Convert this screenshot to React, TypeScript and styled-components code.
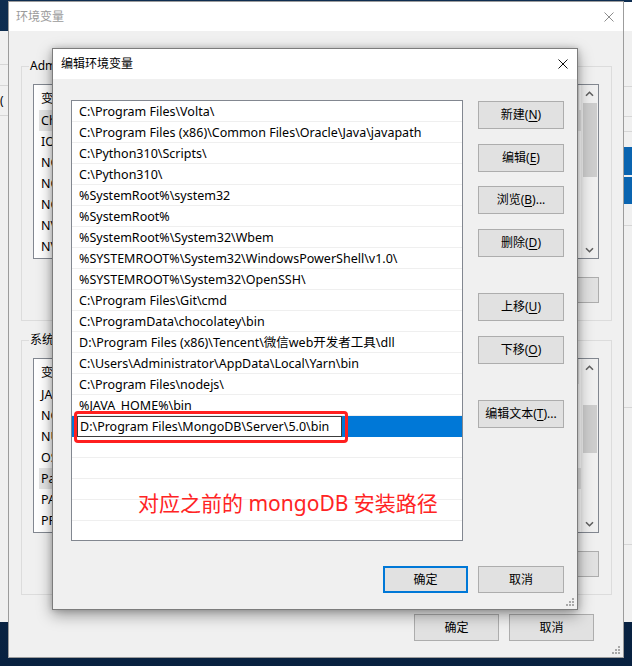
import React from "react";
import styled, { createGlobalStyle } from "styled-components";

const FONT = `"Noto Sans", "Noto Sans CJK SC", sans-serif`;

const GlobalStyle = createGlobalStyle`
  html, body { margin: 0; padding: 0; }
  body {
    width: 632px; height: 666px; overflow: hidden;
    background: #0c2747; font-family: ${FONT}; font-size: 12px; color: #000;
  }
  * { box-sizing: border-box; }
`;

const Desktop = styled.div`
  position: relative;
  width: 632px;
  height: 666px;
  overflow: hidden;
  background: linear-gradient(180deg, #0e2d50 0%, #0b2747 70%, #082140 100%);
`;

/* ---------- windows peeking from behind ---------- */
const BehindWindow = styled.div<{ $left: number; $top: number; $w: number; $h: number }>`
  position: absolute;
  left: ${(p) => p.$left}px;
  top: ${(p) => p.$top}px;
  width: ${(p) => p.$w}px;
  height: ${(p) => p.$h}px;
  background: #f0f0f0;
  display: flex;
  flex-direction: column;
  overflow: hidden;
`;

const BehindRow = styled.div<{ $h: number; $line?: boolean; $blue?: boolean; $white?: boolean }>`
  flex-shrink: 0;
  height: ${(p) => p.$h}px;
  border-bottom: ${(p) => (p.$line ? "1px solid #d6d6d6" : "none")};
  background: ${(p) => (p.$blue ? "#0a64b0" : p.$white ? "#ffffff" : "transparent")};
  font-size: 12px;
  line-height: ${(p) => p.$h}px;
  white-space: nowrap;
  overflow: hidden;
`;

/* ---------- shared window parts ---------- */
const TitleBar = styled.div<{ $h: number; $pl: number; $active?: boolean }>`
  flex-shrink: 0;
  height: ${(p) => p.$h}px;
  background: #ffffff;
  display: flex;
  align-items: center;
  padding: 0 9px 0 ${(p) => p.$pl}px;
  color: ${(p) => (p.$active ? "#000000" : "#9a9a9a")};
  font-size: 12px;
`;

const TitleText = styled.span`
  flex: 1;
  line-height: 16px;
`;

const CloseX = ({ color }: { color: string }) => (
  <svg width="10" height="10" viewBox="0 0 10 10">
    <path d="M0.5 0.5 L9.5 9.5 M9.5 0.5 L0.5 9.5" stroke={color} strokeWidth="1" fill="none" />
  </svg>
);

const Grip = styled.div`
  position: absolute;
  right: 2px;
  bottom: 2px;
  width: 10px;
  height: 10px;
  display: flex;
`;

const GripIcon = () => (
  <Grip>
    <svg width="10" height="10" viewBox="0 0 10 10">
      {[
        [8, 2],
        [5, 5],
        [8, 5],
        [2, 8],
        [5, 8],
        [8, 8],
      ].map(([x, y], i) => (
        <rect key={i} x={x - 1} y={y - 1} width="2" height="2" fill="#a8a8a8" />
      ))}
    </svg>
  </Grip>
);

const WinButton = styled.button<{ $w: number; $h: number; $default?: boolean }>`
  width: ${(p) => p.$w}px;
  height: ${(p) => p.$h}px;
  flex-shrink: 0;
  margin: 0;
  padding: 0;
  background: #e1e1e1;
  border: ${(p) => (p.$default ? "2px solid #0078d7" : "1px solid #adadad")};
  font-family: ${FONT};
  font-size: 12px;
  color: #000;
  line-height: 16px;
  display: flex;
  align-items: center;
  justify-content: center;
  u { text-decoration: underline; text-underline-offset: 2px; }
`;

/* ---------- background "环境变量" window ---------- */
const EnvWindow = styled.div`
  position: absolute;
  left: 8px;
  top: 1px;
  width: 616px;
  height: 657px;
  background: #f0f0f0;
  border: 1px solid #9c9c9c;
  display: flex;
  flex-direction: column;
`;

const EnvBody = styled.div`
  display: flex;
  flex-direction: column;
  gap: 19px;
  padding: 35px 11px 0 12px;
`;

const GroupBox = styled.div`
  position: relative;
  height: 255px;
  border: 1px solid #dcdcdc;
  padding: 17px 12px 0 11px;
  display: flex;
  flex-direction: column;
`;

const Legend = styled.span`
  position: absolute;
  left: 7px;
  top: -9px;
  padding: 0 1px;
  background: #f0f0f0;
  line-height: 16px;
  white-space: nowrap;
`;

const ListView = styled.div`
  height: 175px;
  border: 1px solid #828790;
  background: #fff;
  display: flex;
  flex-shrink: 0;
  font-size: 12.5px;
`;

const ListContent = styled.div`
  flex: 1;
  display: flex;
  flex-direction: column;
  overflow: hidden;
`;

const ListHeader = styled.div`
  height: 25px;
  display: flex;
  align-items: center;
  flex-shrink: 0;
`;

const HeaderCell = styled.div<{ $w: number }>`
  width: ${(p) => p.$w}px;
  height: 100%;
  padding-left: 7px;
  display: flex;
  align-items: center;
  border-right: 1px solid #e5e5e5;
`;

const VarRow = styled.div<{ $selected?: boolean }>`
  height: 21px;
  margin-left: 5px;
  padding-left: 2px;
  display: flex;
  align-items: center;
  flex-shrink: 0;
  white-space: nowrap;
  background: ${(p) => (p.$selected ? "#e5e5e5" : "transparent")};
`;

const VarName = styled.span`
  width: 180px;
`;

const ScrollBar = styled.div`
  width: 17px;
  background: #f0f0f0;
  display: flex;
  flex-direction: column;
  flex-shrink: 0;
`;

const ScrollArrow = styled.div`
  height: 17px;
  display: flex;
  align-items: center;
  justify-content: center;
  flex-shrink: 0;
`;

const ScrollTrack = styled.div`
  flex: 1;
  display: flex;
  flex-direction: column;
`;

const Thumb = styled.div<{ $top: number; $h: number }>`
  margin: ${(p) => p.$top}px 1px 0 2px;
  height: ${(p) => p.$h}px;
  background: #cdcdcd;
`;

const Chevron = ({ down }: { down?: boolean }) => (
  <svg width="9" height="6" viewBox="0 0 9 6">
    <path
      d={down ? "M1 1.2 L4.5 4.7 L8 1.2" : "M1 4.8 L4.5 1.3 L8 4.8"}
      stroke="#606060"
      strokeWidth="1.6"
      fill="none"
    />
  </svg>
);

const ButtonRow = styled.div<{ $mt: number; $pr?: number }>`
  margin-top: ${(p) => p.$mt}px;
  padding-right: ${(p) => p.$pr ?? 0}px;
  display: flex;
  justify-content: flex-end;
  gap: 10px;
`;

/* ---------- foreground "编辑环境变量" dialog ---------- */
const Dialog = styled.div`
  position: absolute;
  left: 52px;
  top: 48px;
  width: 526px;
  height: 562px;
  background: #f0f0f0;
  border: 1px solid #7c7c7c;
  box-shadow: 0 5px 14px rgba(0, 0, 0, 0.38), 0 0 6px rgba(0, 0, 0, 0.18);
  display: flex;
  flex-direction: column;
`;

const DialogBody = styled.div`
  position: relative;
  display: grid;
  grid-template-columns: 392px 86px;
  grid-template-rows: 441px 27px;
  column-gap: 15px;
  row-gap: 25px;
  padding: 21px 13px 0 18px;
`;

const PathList = styled.div`
  border: 1px solid #828790;
  background: #fff;
  display: flex;
  flex-direction: column;
  overflow: hidden;
  font-size: 12.5px;
`;

const PathRow = styled.div<{ $selected?: boolean }>`
  height: 21px;
  flex-shrink: 0;
  display: flex;
  align-items: center;
  padding-left: ${(p) => (p.$selected ? 5 : 7)}px;
  padding-top: ${(p) => (p.$selected ? 0 : 1)}px;
  white-space: nowrap;
  background: ${(p) => (p.$selected ? "#0078d7" : "#fff")};
  border-bottom: ${(p) => (p.$selected ? "none" : "1px solid #efefef")};
  line-height: 19px;
`;

const EditBox = styled.div`
  width: 265px;
  height: 21px;
  background: #fff;
  border: 1px solid #3c3c3c;
  padding-left: 2px;
  display: flex;
  align-items: center;
  white-space: nowrap;
`;

const ButtonColumn = styled.div`
  display: flex;
  flex-direction: column;
  gap: 14.7px;
  padding-top: 1px;
`;

const ColumnSpacer = styled.div`
  height: 6.5px;
  flex-shrink: 0;
`;

const DialogFooter = styled.div`
  grid-column: 1 / -1;
  display: flex;
  justify-content: flex-end;
  gap: 10px;
`;

const RedBox = styled.div`
  position: absolute;
  left: 21px;
  top: 332px;
  width: 274px;
  height: 32px;
  border: 3px solid #ff1f1f;
  border-radius: 4px;
  pointer-events: none;
`;

const RedNote = styled.div`
  position: absolute;
  left: 85px;
  top: 409px;
  font-size: 21px;
  line-height: 30px;
  color: #ff2424;
  white-space: nowrap;
`;

/* ---------- data ---------- */
const paths = [
  "C:\\Program Files\\Volta\\",
  "C:\\Program Files (x86)\\Common Files\\Oracle\\Java\\javapath",
  "C:\\Python310\\Scripts\\",
  "C:\\Python310\\",
  "%SystemRoot%\\system32",
  "%SystemRoot%",
  "%SystemRoot%\\System32\\Wbem",
  "%SYSTEMROOT%\\System32\\WindowsPowerShell\\v1.0\\",
  "%SYSTEMROOT%\\System32\\OpenSSH\\",
  "C:\\Program Files\\Git\\cmd",
  "C:\\ProgramData\\chocolatey\\bin",
  "D:\\Program Files (x86)\\Tencent\\微信web开发者工具\\dll",
  "C:\\Users\\Administrator\\AppData\\Local\\Yarn\\bin",
  "C:\\Program Files\\nodejs\\",
  "%JAVA_HOME%\\bin",
];
const selectedPath = "D:\\Program Files\\MongoDB\\Server\\5.0\\bin";

const userVars = [
  ["ChocolateyLastPathUpdate", "133012345678901234"],
  ["IOT_HOME", "C:\\iot"],
  ["NODE_HOME", "C:\\Program Files\\nodejs"],
  ["NODE_PATH", "C:\\Program Files\\nodejs\\node_modules"],
  ["NODE_GLOBAL", "C:\\Program Files\\nodejs\\node_global"],
  ["NVM_HOME", "C:\\nvm"],
  ["NVM_SYMLINK", "C:\\Program Files\\nodejs"],
];

const sysVars = [
  ["JAVA_HOME", "C:\\Program Files\\Java\\jdk1.8.0"],
  ["NODE_ENV", "development"],
  ["NUMBER_OF_PROCESSORS", "8"],
  ["OS", "Windows_NT"],
  ["Path", "C:\\Program Files\\Volta\\;C:\\Program Files (x86)\\..."],
  ["PATHEXT", ".COM;.EXE;.BAT;.CMD;.VBS;.VBE;.JS"],
  ["PROCESSOR_ARCHITECTURE", "AMD64"],
];

const VarList = ({
  rows,
  selected,
  thumbTop,
  thumbH,
}: {
  rows: string[][];
  selected: number;
  thumbTop: number;
  thumbH: number;
}) => (
  <ListView>
    <ListContent>
      <ListHeader>
        <HeaderCell $w={185}>变量</HeaderCell>
        <HeaderCell $w={360}>值</HeaderCell>
      </ListHeader>
      {rows.map(([n, v], i) => (
        <VarRow key={n} $selected={i === selected}>
          <VarName>{n}</VarName>
          <span>{v}</span>
        </VarRow>
      ))}
    </ListContent>
    <ScrollBar>
      <ScrollArrow>
        <Chevron />
      </ScrollArrow>
      <ScrollTrack>
        <Thumb $top={thumbTop} $h={thumbH} />
      </ScrollTrack>
      <ScrollArrow>
        <Chevron down />
      </ScrollArrow>
    </ScrollBar>
  </ListView>
);

export default function App() {
  return (
    <Desktop>
      <GlobalStyle />

      <BehindWindow $left={0} $top={31} $w={8} $h={591}>
        <BehindRow $h={34} $line />
        <BehindRow $h={21} $line />
        <BehindRow $h={30} $line>(</BehindRow>
      </BehindWindow>

      <BehindWindow $left={624} $top={2} $w={8} $h={620}>
        <BehindRow $h={29} $white />
        <BehindRow $h={56} $line />
        <BehindRow $h={30} $line />
        <BehindRow $h={15} $line />
        <BehindRow $h={15} />
        <BehindRow $h={28} $blue />
        <BehindRow $h={2} />
        <BehindRow $h={27} $blue />
        <BehindRow $h={22} $line />
        <BehindRow $h={182} $line />
        <BehindRow $h={137} $line />
      </BehindWindow>

      <EnvWindow>
        <TitleBar $h={29} $pl={7}>
          <TitleText>环境变量</TitleText>
          <CloseX color="#8c8c8c" />
        </TitleBar>
        <EnvBody>
          <GroupBox>
            <Legend>
              Administrator 的用户变量(<u>U</u>)
            </Legend>
            <VarList rows={userVars} selected={0} thumbTop={1} thumbH={74} />
            <ButtonRow $mt={18}>
              <WinButton $w={86} $h={26}>新建(N)...</WinButton>
              <WinButton $w={86} $h={26}>编辑(E)...</WinButton>
              <WinButton $w={86} $h={26}>删除(D)</WinButton>
            </ButtonRow>
          </GroupBox>
          <GroupBox>
            <Legend>
              系统变量(<u>S</u>)
            </Legend>
            <VarList rows={sysVars} selected={4} thumbTop={29} thumbH={48} />
            <ButtonRow $mt={18}>
              <WinButton $w={86} $h={26}>新建(W)...</WinButton>
              <WinButton $w={86} $h={26}>编辑(I)...</WinButton>
              <WinButton $w={86} $h={26}>删除(L)</WinButton>
            </ButtonRow>
          </GroupBox>
        </EnvBody>
        <ButtonRow $mt={19} $pr={29}>
          <WinButton $w={85} $h={27}>确定</WinButton>
          <WinButton $w={85} $h={27}>取消</WinButton>
        </ButtonRow>
        <GripIcon />
      </EnvWindow>

      <Dialog>
        <TitleBar $h={30} $pl={8} $active>
          <TitleText>编辑环境变量</TitleText>
          <CloseX color="#111111" />
        </TitleBar>
        <DialogBody>
          <PathList>
            {paths.map((p) => (
              <PathRow key={p}>{p}</PathRow>
            ))}
            <PathRow $selected>
              <EditBox>{selectedPath}</EditBox>
            </PathRow>
            {[0, 1, 2, 3, 4].map((i) => (
              <PathRow key={`e${i}`} />
            ))}
          </PathList>
          <ButtonColumn>
            <WinButton $w={86} $h={28}>
              新建(<u>N</u>)
            </WinButton>
            <WinButton $w={86} $h={28}>
              编辑(<u>E</u>)
            </WinButton>
            <WinButton $w={86} $h={28}>
              浏览(<u>B</u>)...
            </WinButton>
            <WinButton $w={86} $h={28}>
              删除(<u>D</u>)
            </WinButton>
            <ColumnSpacer />
            <WinButton $w={86} $h={28}>
              上移(<u>U</u>)
            </WinButton>
            <WinButton $w={86} $h={28}>
              下移(<u>O</u>)
            </WinButton>
            <ColumnSpacer />
            <WinButton $w={86} $h={28}>
              编辑文本(<u>T</u>)...
            </WinButton>
          </ButtonColumn>
          <DialogFooter>
            <WinButton $w={85} $h={27} $default>
              确定
            </WinButton>
            <WinButton $w={86} $h={27}>
              取消
            </WinButton>
          </DialogFooter>
          <RedBox />
          <RedNote>对应之前的 mongoDB 安装路径</RedNote>
        </DialogBody>
        <GripIcon />
      </Dialog>
    </Desktop>
  );
}
